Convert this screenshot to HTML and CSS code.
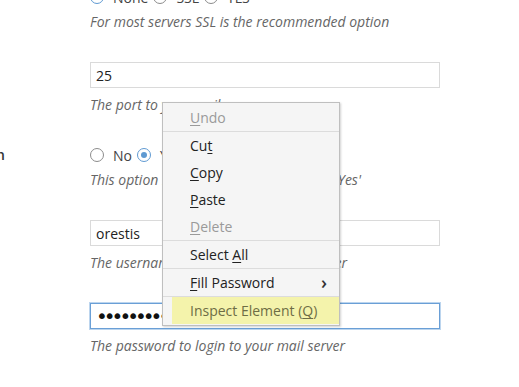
FILE: index.html
```html
<!DOCTYPE html>
<html lang="en">
<head>
    <meta charset="UTF-8">
    <meta name="viewport" content="width=device-width, initial-scale=1.0">
    <title>Mail settings</title>
    <link rel="stylesheet" href="styles.css">
</head>
<body>
    <form class="settings">
        <div class="row radio-row">
            <label class="row-label">Encryption</label>
            <div class="field">
                <div class="radios">
                    <span class="radio checked"></span><span class="radio-text">None</span>
                    <span class="radio"></span><span class="radio-text">SSL</span>
                    <span class="radio"></span><span class="radio-text">TLS</span>
                </div>
                <div class="help">For most servers SSL is the recommended option</div>
            </div>
        </div>
        <div class="row input-row">
            <label class="row-label">Port</label>
            <div class="field">
                <input class="text-input" type="text" value="25">
                <div class="help">The port to your mail server</div>
            </div>
        </div>
        <div class="row radio-row">
            <label class="row-label">Authentication</label>
            <div class="field">
                <div class="radios">
                    <span class="radio"></span><span class="radio-text">No</span>
                    <span class="radio checked"></span><span class="radio-text">Yes</span>
                </div>
                <div class="help">This option is required by most servers: 'Yes'</div>
            </div>
        </div>
        <div class="row input-row">
            <label class="row-label">Username</label>
            <div class="field">
                <input class="text-input" type="text" value="orestis">
                <div class="help">The username to login to your mail server</div>
            </div>
        </div>
        <div class="row input-row">
            <label class="row-label">Password</label>
            <div class="field">
                <input class="text-input password focused" type="password" value="secretpass">
                <div class="help">The password to login to your mail server</div>
            </div>
        </div>
    </form>

    <div class="context-menu">
        <div class="item disabled"><u>U</u>ndo</div>
        <div class="sep"></div>
        <div class="item">Cu<u>t</u></div>
        <div class="item"><u>C</u>opy</div>
        <div class="item"><u>P</u>aste</div>
        <div class="item disabled"><u>D</u>elete</div>
        <div class="sep"></div>
        <div class="item">Select <u>A</u>ll</div>
        <div class="sep"></div>
        <div class="item submenu"><span><u>F</u>ill Password</span><span class="chevron">&#8250;</span></div>
        <div class="sep"></div>
        <div class="item hover">Inspect Element (<u>Q</u>)</div>
    </div>
</body>
</html>
```

FILE: styles.css
```css
body {
    margin: 0;
    font-family: "Open Sans", "Noto Sans", sans-serif;
    background: #fff;
    color: #333;
    overflow: hidden;
}
.settings {
    margin: -13px 0 0 -96px;
    display: flex;
    flex-direction: column;
    gap: 31px;
}
.row {
    display: grid;
    grid-template-columns: 186px 350px;
    align-items: start;
}
.row-label {
    font-size: 14px;
    font-weight: 600;
    color: #333;
    white-space: nowrap;
}
.radio-row .row-label {
    line-height: 20px;
}
.input-row .row-label {
    line-height: 26px;
}
.radios {
    display: flex;
    align-items: center;
    height: 20px;
    font-size: 14px;
    color: #444;
}
.radio {
    width: 12px;
    height: 12px;
    border: 1px solid #8c8c8c;
    border-radius: 50%;
    background: #fff;
    margin-right: 9px;
    position: relative;
}
.radio.checked {
    border-color: #5f9ad2;
}
.radio.checked::after {
    content: "";
    position: absolute;
    left: 3px;
    top: 3px;
    width: 6px;
    height: 6px;
    border-radius: 50%;
    background: #5f9ad2;
}
.radio-text {
    margin-right: 5px;
}
.help {
    font-size: 14px;
    font-style: italic;
    color: #666;
    line-height: 19px;
    white-space: nowrap;
}
.radio-row .help {
    margin-top: 5px;
}
.input-row .help {
    margin-top: 7px;
}
.text-input {
    display: block;
    box-sizing: border-box;
    width: 350px;
    height: 26px;
    margin: 0;
    padding: 0 5px;
    border: 1px solid #dadada;
    border-radius: 0;
    font-family: "Open Sans", "Noto Sans", sans-serif;
    font-size: 14px;
    color: #222;
    outline: none;
}
.text-input.password {
    font-family: "DejaVu Sans", sans-serif;
    font-size: 20px;
    letter-spacing: -4px;
    color: #111;
}
.text-input.focused {
    border-color: #6a9fd6;
    box-shadow: 0 0 0 1px #bcd5ee;
}
.context-menu {
    position: absolute;
    left: 162px;
    top: 102px;
    width: 176px;
    padding: 1px 0 1px;
    background: #f5f5f5;
    border: 1px solid #bfbfbf;
    box-shadow: 1px 1px 2px rgba(0, 0, 0, 0.18);
    font-family: "Open Sans", "Noto Sans", sans-serif;
    font-size: 14px;
    color: #222;
}
.item {
    height: 27px;
    line-height: 27px;
    padding: 0 12px 0 27px;
    white-space: nowrap;
}
.item u {
    text-underline-offset: 2px;
}
.item.disabled {
    color: #9a9a9a;
}
.item.submenu {
    display: flex;
    justify-content: space-between;
}
.chevron {
    font-size: 18px;
    font-weight: 600;
    color: #333;
}
.item.hover {
    margin-left: 9px;
    padding-left: 18px;
    background: #f4f3ab;
    color: #6e6d45;
}
.sep {
    height: 1px;
    background: #dcdcdc;
}
```
